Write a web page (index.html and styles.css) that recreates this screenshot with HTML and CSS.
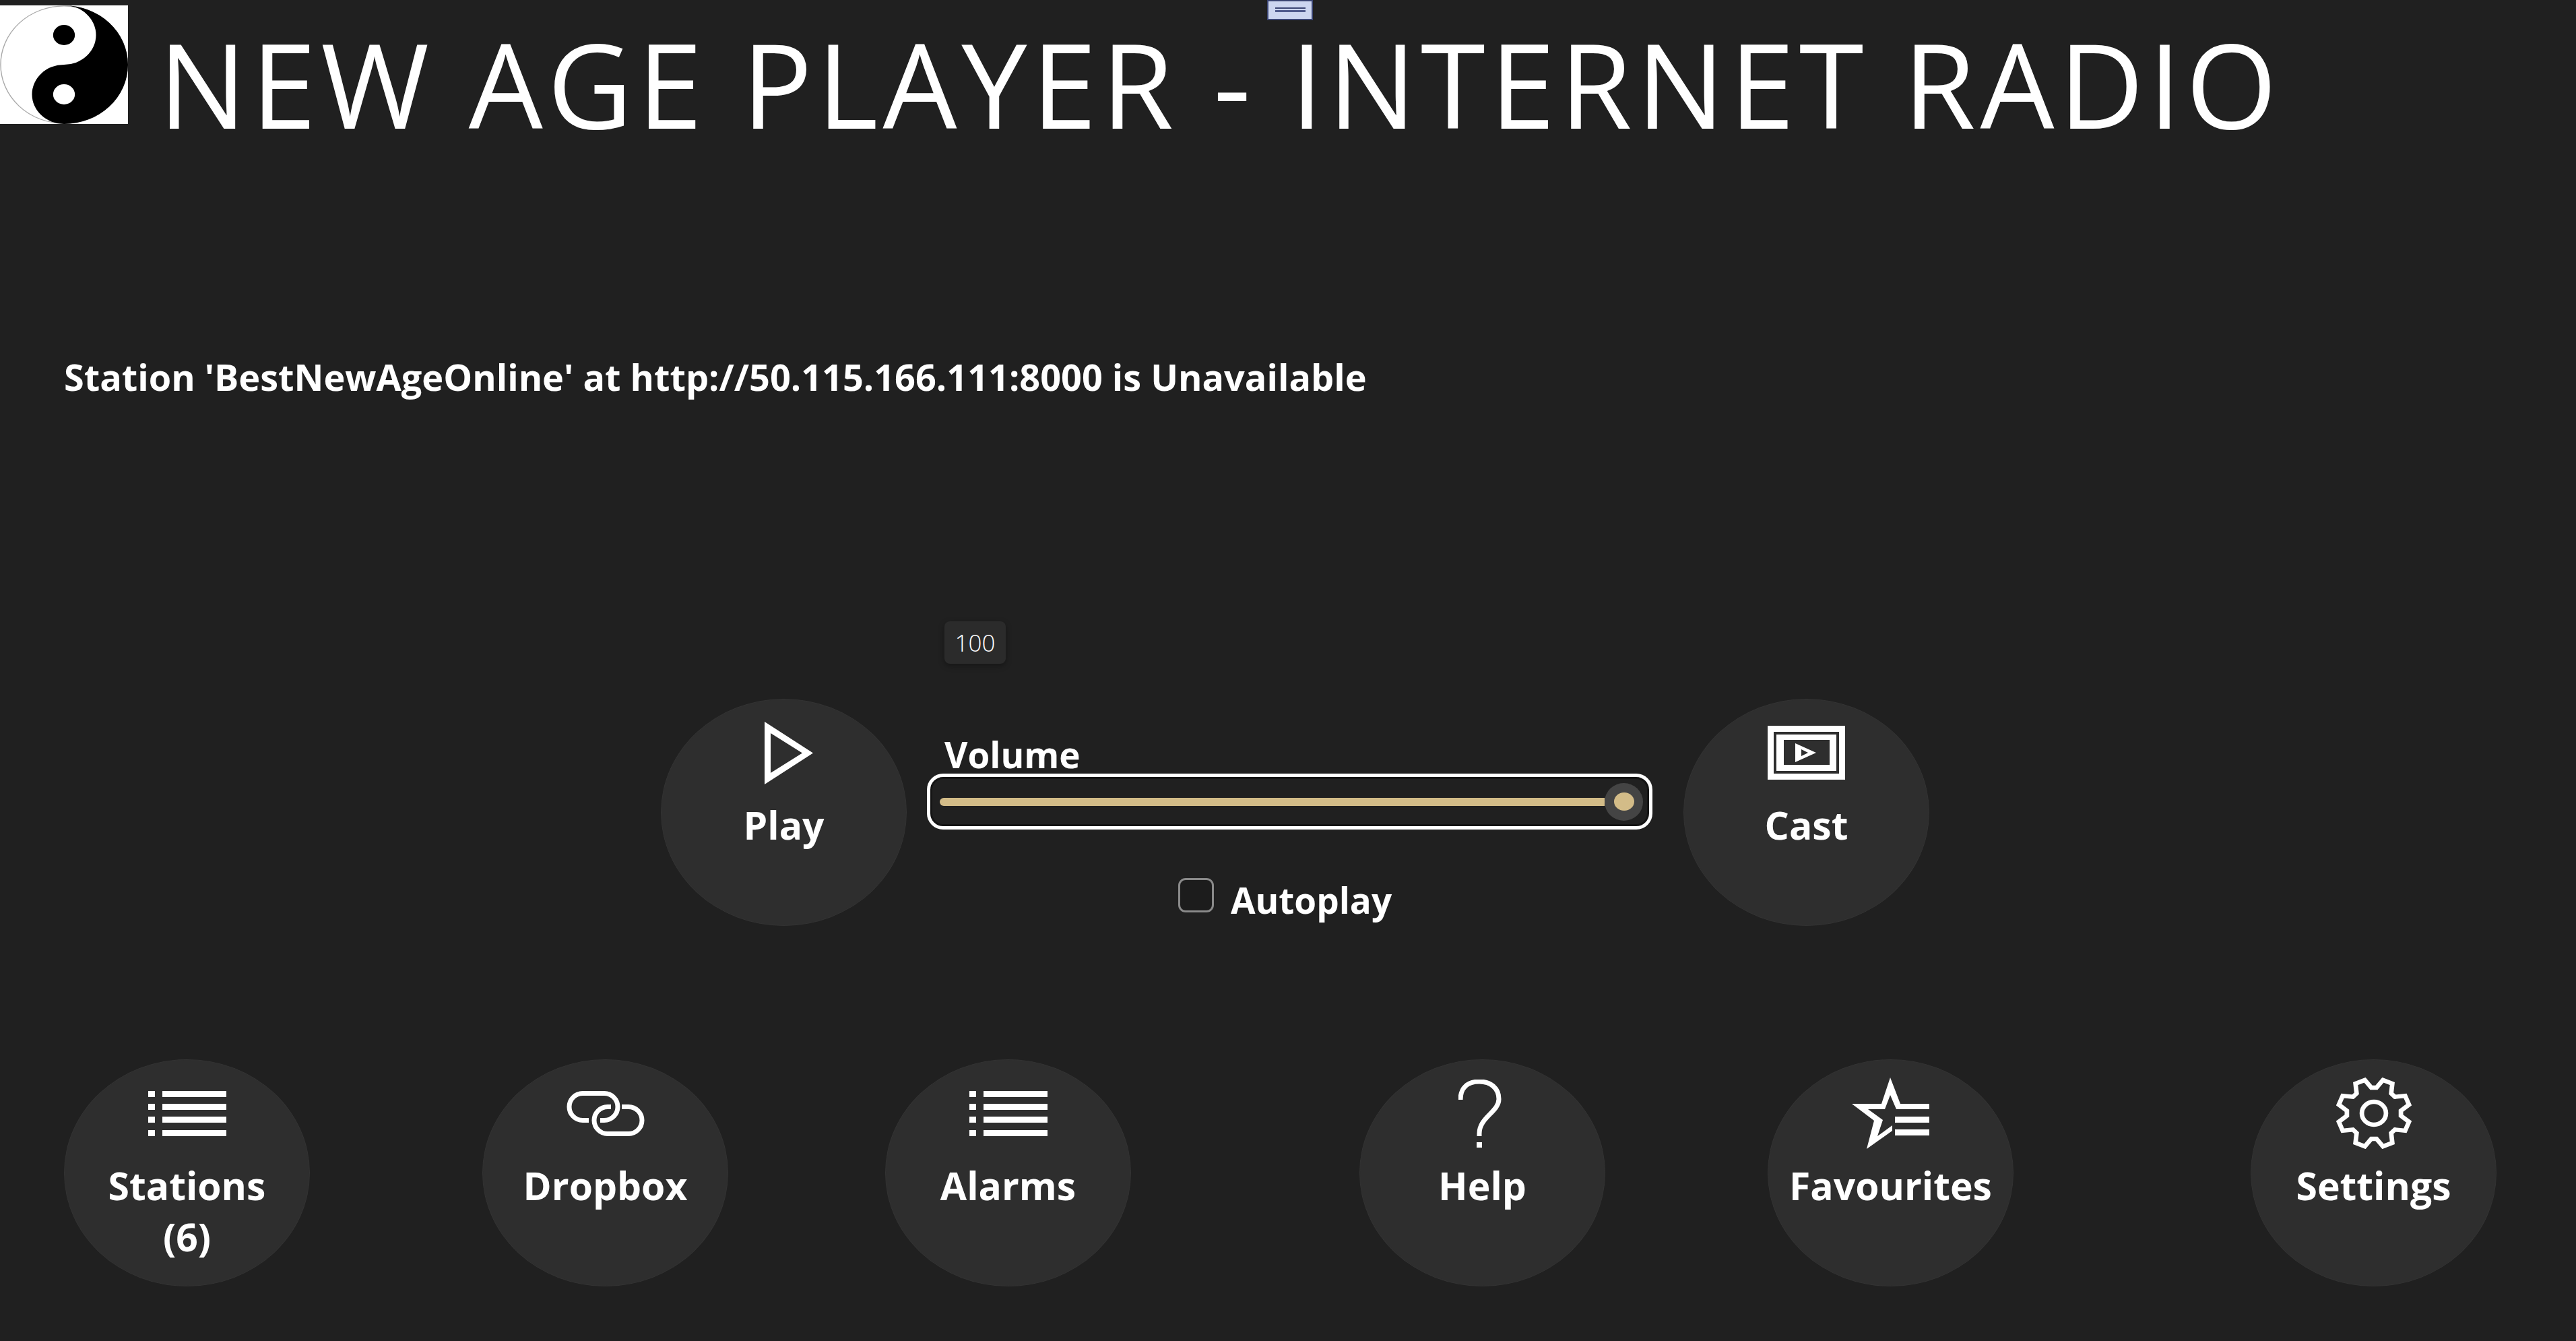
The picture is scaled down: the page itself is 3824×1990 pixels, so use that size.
FILE: index.html
```html
<!DOCTYPE html>
<html lang="en">
<head>
<meta charset="utf-8">
<title>New Age Player - Internet Radio</title>
<link rel="stylesheet" href="styles.css">
</head>
<body>
<div class="handle"><span class="handle-line"></span><span class="handle-line thin"></span></div>
<header class="header">
  <svg class="logo" viewBox="-100 -100 200 200" preserveAspectRatio="none">
    <rect x="-100" y="-100" width="200" height="200" fill="#fff"/>
    <circle cx="0" cy="0" r="99" fill="#fff" stroke="#aaa" stroke-width="1.5"/>
    <path d="M0,-100 A100,100 0 0 1 0,100 A50,50 0 0 1 0,0 A50,50 0 0 0 0,-100 Z" fill="#000"/>
    <circle cx="0" cy="-50" r="17" fill="#000"/>
    <circle cx="0" cy="50" r="17" fill="#fff"/>
  </svg>
  <h1 class="title">NEW AGE PLAYER - INTERNET RADIO</h1>
</header>
<p class="status">Station 'BestNewAgeOnline' at http://50.115.166.111:8000 is Unavailable</p>
<section class="controls">
  <button class="round">
    <span class="icon"><svg class="play-icon" width="72" height="93" viewBox="0 0 72 93"><path d="M0,0 L72,46.5 L0,93 Z M9,17 L56,46.5 L9,76 Z" fill="#fff" fill-rule="evenodd"/></svg></span>
    <span class="label">Play</span>
  </button>
  <div class="volume">
    <div class="tooltip">100</div>
    <div class="volume-label">Volume</div>
    <div class="slider">
      <div class="track"></div>
      <div class="thumb"><div class="thumb-dot"></div></div>
    </div>
    <div class="autoplay">
      <span class="checkbox"></span>
      <span class="autoplay-text">Autoplay</span>
    </div>
  </div>
  <button class="round">
    <span class="icon"><svg width="115" height="80" viewBox="0 0 115 80">
      <rect width="115" height="80" fill="#fff"/>
      <rect x="9" y="9" width="97" height="62" fill="#2e2e2e"/>
      <rect x="13" y="13" width="89" height="54" fill="#fff"/>
      <rect x="24" y="21" width="68" height="37" fill="#2e2e2e"/>
      <path d="M41,26 L72,40 L41,54 Z M50,35 V45 L60,40 Z" fill="#fff" fill-rule="evenodd"/>
    </svg></span>
    <span class="label">Cast</span>
  </button>
</section>
<nav class="nav">
  <button class="round">
    <span class="icon"><svg width="116" height="67" viewBox="0 0 116 67" fill="#fff">
      <rect width="10" height="9"/><rect x="21" width="95" height="9"/>
      <rect y="19" width="10" height="9"/><rect x="21" y="19" width="95" height="9"/>
      <rect y="38" width="10" height="9"/><rect x="21" y="38" width="95" height="9"/>
      <rect y="58" width="10" height="9"/><rect x="21" y="58" width="95" height="9"/>
    </svg></span>
    <span class="label">Stations<br>(6)</span>
  </button>
  <button class="round">
    <span class="icon"><svg width="116" height="67" viewBox="0 0 116 67" fill="none" stroke="#fff" stroke-width="7">
      <path d="M33,43.5 H24 A20,20 0 0 1 24,3.5 H56 A20,20 0 0 1 56,43.5 H50"/>
      <path d="M82,23.5 H92 A20,20 0 0 1 92,63.5 H61 A20,20 0 0 1 61,23.5 H66"/>
    </svg></span>
    <span class="label">Dropbox</span>
  </button>
  <button class="round">
    <span class="icon"><svg width="116" height="67" viewBox="0 0 116 67" fill="#fff">
      <rect width="10" height="9"/><rect x="21" width="95" height="9"/>
      <rect y="19" width="10" height="9"/><rect x="21" y="19" width="95" height="9"/>
      <rect y="38" width="10" height="9"/><rect x="21" y="38" width="95" height="9"/>
      <rect y="58" width="10" height="9"/><rect x="21" y="58" width="95" height="9"/>
    </svg></span>
    <span class="label">Alarms</span>
  </button>
  <button class="round">
    <span class="icon"><svg class="help-icon" width="64" height="101" viewBox="0 0 64 101">
      <path d="M3,30 C3,12 14,3 31,3 C48,3 60,13 60,29 C60,48 31,56 31,80 V84" fill="none" stroke="#fff" stroke-width="7"/>
      <rect x="27" y="93" width="8" height="8" fill="#fff"/>
    </svg></span>
    <span class="label">Help</span>
  </button>
  <button class="round">
    <span class="icon"><svg width="115" height="106" viewBox="0 0 115 106" fill="#fff">
      <path d="M57,0 L72,39 H115 V47 H66 L57,26 L49,47 H24 L46,63 L38,87 L60,71 V79 L22,106 L33,64 L0,39 H44 Z"/>
      <rect x="64" y="58" width="51" height="9"/>
      <rect x="64" y="77" width="51" height="9"/>
    </svg></span>
    <span class="label">Favourites</span>
  </button>
  <button class="round">
    <span class="icon"><svg width="112" height="106" viewBox="0 0 100 100" preserveAspectRatio="none">
      <g transform="translate(50,50)" fill="none" stroke="#fff" stroke-width="6">
        <polygon points="3.45,-35.8 12,-46.5 24.4,-41.4 22.9,-27.8 27.8,-22.9 41.4,-24.4 46.5,-12 35.8,-3.45 35.8,3.45 46.5,12 41.4,24.4 27.8,22.9 22.9,27.8 24.4,41.4 12,46.5 3.45,35.8 -3.45,35.8 -12,46.5 -24.4,41.4 -22.9,27.8 -27.8,22.9 -41.4,24.4 -46.5,12 -35.8,3.45 -35.8,-3.45 -46.5,-12 -41.4,-24.4 -27.8,-22.9 -22.9,-27.8 -24.4,-41.4 -12,-46.5 -3.45,-35.8"/>
        <circle r="16"/>
      </g>
    </svg></span>
    <span class="label">Settings</span>
  </button>
</nav>
</body>
</html>
```
FILE: styles.css
```css
* { box-sizing: border-box; }
html, body { margin: 0; height: 100%; }
body {
  background: #202020;
  color: #fff;
  font-family: "Open Sans", "Noto Sans", sans-serif;
  overflow: hidden;
  position: relative;
}
.handle {
  position: absolute;
  left: 1881px;
  top: 0;
  width: 68px;
  height: 30px;
  background: #cdd6f0;
  border: 2px solid #3b4573;
  display: flex;
  flex-direction: column;
  align-items: center;
  gap: 2px;
  padding-top: 9px;
}
.handle-line { width: 45px; height: 2px; background: #3b4573; }
.handle-line.thin { height: 3px; background: #4f5a8c; }
.header { display: flex; align-items: flex-start; height: 224px; }
.logo { width: 190px; height: 176px; margin-top: 8px; flex: none; }
.title {
  margin: 24px 0 0 45px;
  font-size: 174px;
  line-height: 200px;
  font-weight: 400;
  letter-spacing: 6.8px;
  white-space: nowrap;
}
.status {
  margin: 299px 0 0 95px;
  font-size: 54px;
  line-height: 72px;
  font-weight: 700;
}
.controls {
  display: flex;
  margin-top: 442px;
  padding-left: 981px;
}
.round {
  width: 365px;
  height: 337px;
  flex: none;
  border: 1px solid #333;
  border-radius: 50%;
  background: #2e2e2e;
  color: #fff;
  font: inherit;
  padding: 26px 0 0;
  display: flex;
  flex-direction: column;
  align-items: center;
}
.icon { height: 106px; display: flex; align-items: center; justify-content: center; flex: none; }
.icon svg { display: block; }
.play-icon { margin-left: 14px; }
.help-icon { margin-right: 8px; }
.label {
  margin-top: 16px;
  font-size: 57px;
  line-height: 76px;
  font-weight: 700;
  text-align: center;
}
.volume {
  position: relative;
  width: 1077px;
  margin: 0 46px 0 30px;
  padding-top: 55px;
}
.tooltip {
  position: absolute;
  left: 26px;
  top: -115px;
  width: 91px;
  height: 63px;
  background: #2b2b2b;
  border-radius: 8px;
  box-shadow: 0 3px 8px rgba(0,0,0,.35);
  display: flex;
  align-items: center;
  justify-content: center;
  font-size: 35px;
  font-weight: 300;
}
.volume-label {
  margin-left: 26px;
  font-size: 53px;
  line-height: 56px;
  font-weight: 700;
}
.slider {
  height: 83px;
  border: 5px solid #fff;
  border-radius: 24px;
  box-shadow: inset 0 0 0 3px #141414;
  display: flex;
  align-items: center;
  padding: 0 9px 0 14px;
}
.track { flex: 1; height: 12px; background: #d3bc88; border-radius: 6px 0 0 6px; }
.thumb {
  width: 57px;
  height: 56px;
  border-radius: 50%;
  background: #444;
  display: flex;
  align-items: center;
  justify-content: center;
}
.thumb-dot { width: 30px; height: 27px; border-radius: 50%; background: #d3bc88; }
.autoplay {
  margin-top: 72px;
  padding-right: 14px;
  display: flex;
  justify-content: center;
  align-items: flex-start;
  gap: 25px;
}
.checkbox {
  width: 53px;
  height: 51px;
  border: 3px solid #8a8a8a;
  border-radius: 11px;
  background: #1c1c1c;
}
.autoplay-text {
  margin-top: 5px;
  font-size: 53px;
  line-height: 56px;
  font-weight: 700;
}
.nav {
  display: grid;
  grid-template-columns: 621px 598px 704px 606px 717px 365px;
  margin-top: 198px;
  padding-left: 95px;
}
```
